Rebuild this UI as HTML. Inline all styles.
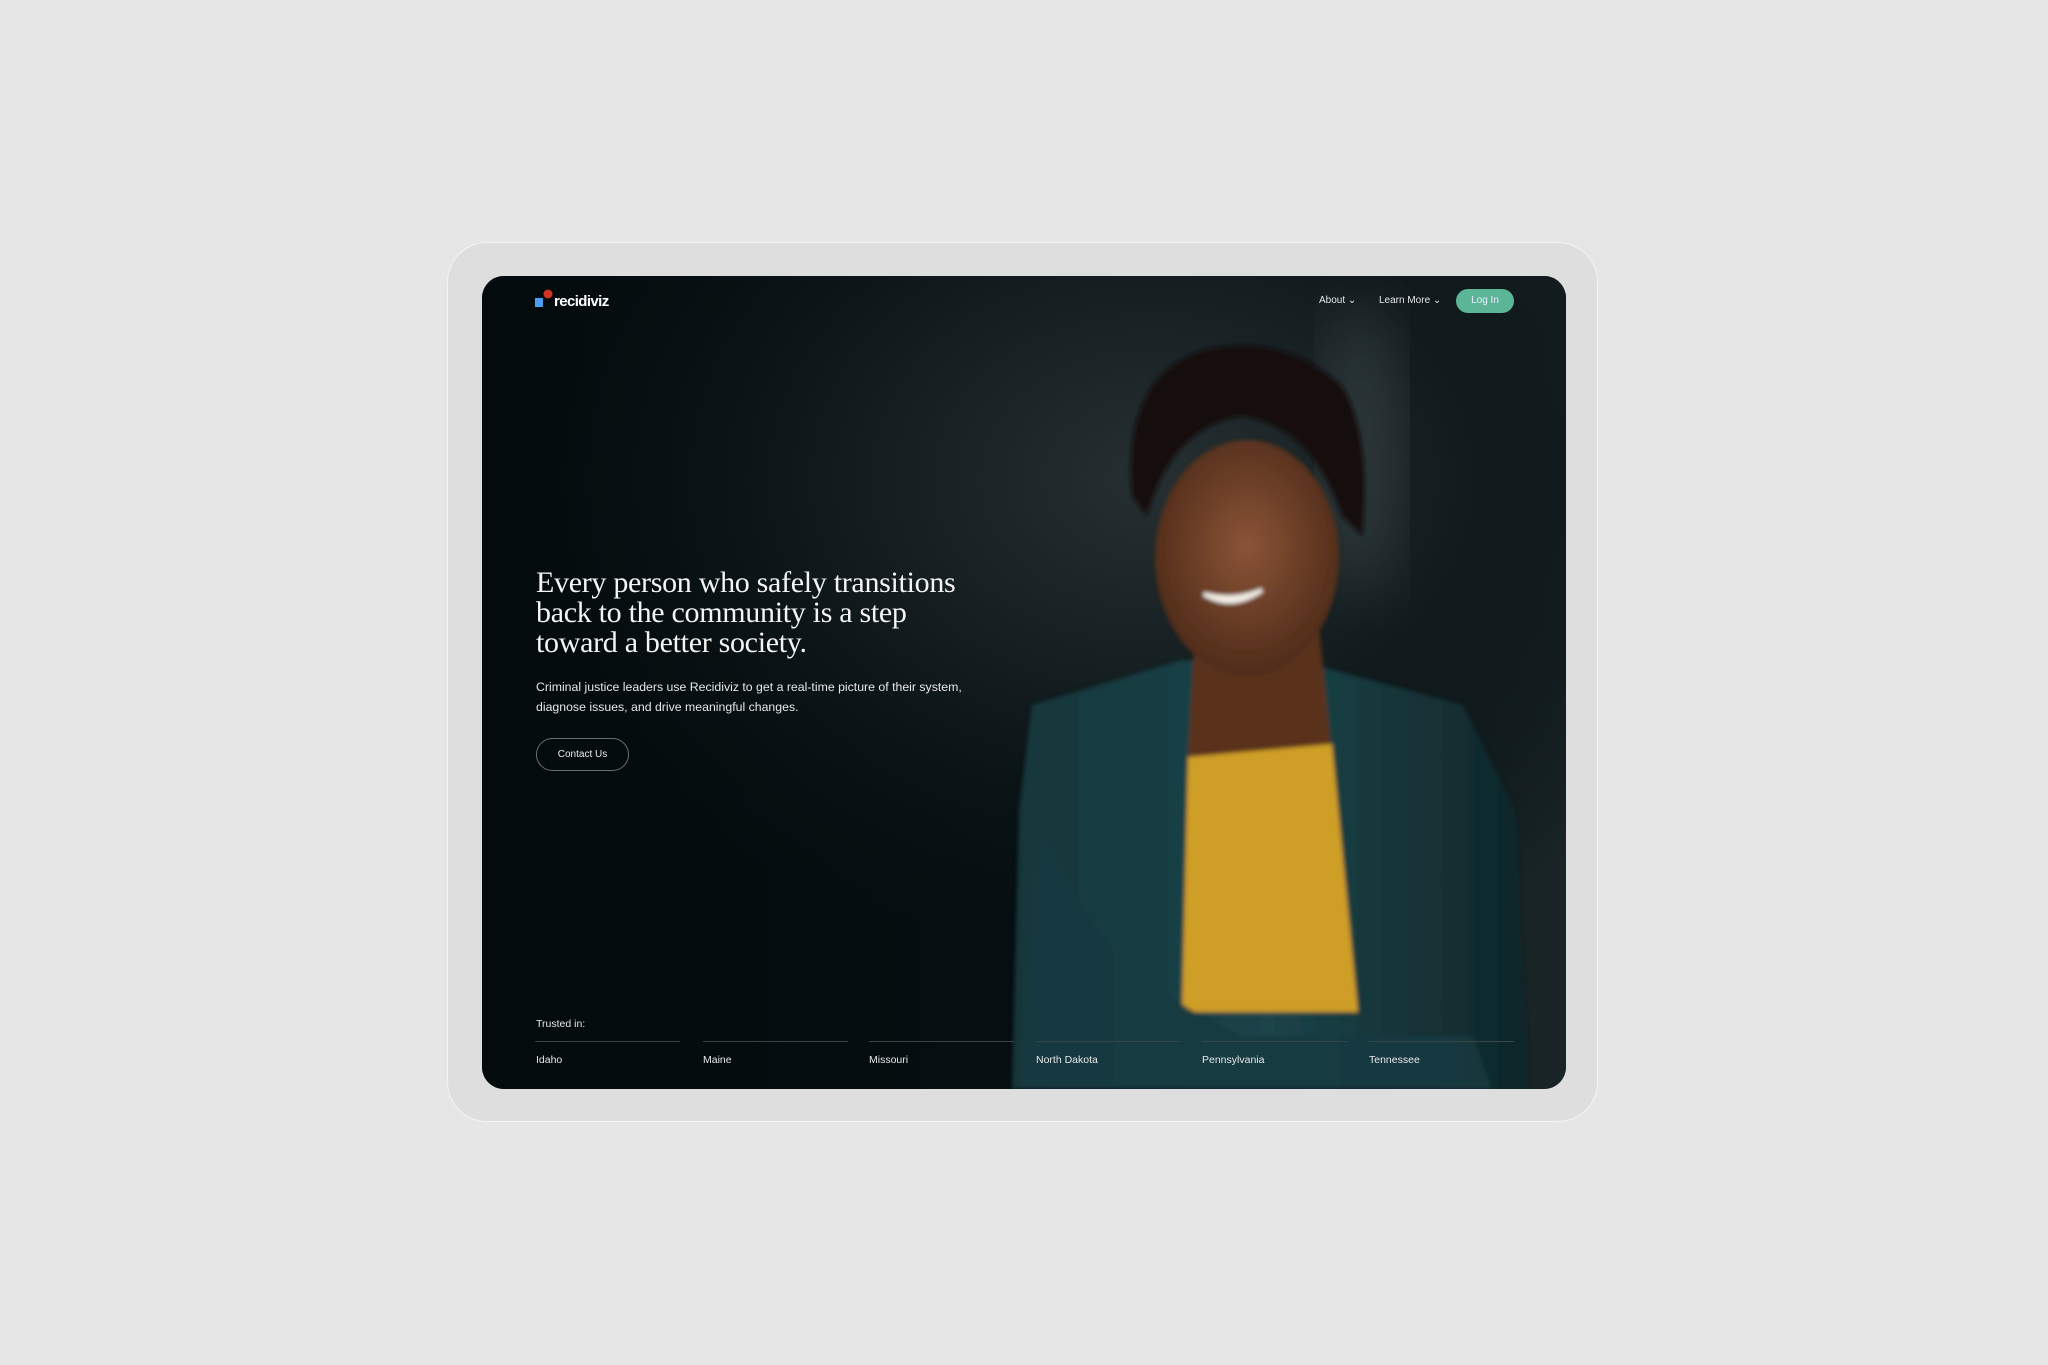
<!DOCTYPE html>
<html><head><meta charset="utf-8">
<style>
html,body{margin:0;padding:0;width:2048px;height:1365px;background:#e6e6e6;overflow:hidden;font-family:"Liberation Sans",sans-serif}
.outer{position:absolute;left:447px;top:242px;width:1151px;height:880px;background:#dedede;border:1px solid #f4f4f4;border-radius:40px;box-sizing:border-box}
.screen{position:absolute;left:482px;top:276px;width:1084px;height:813px;border-radius:22px;overflow:hidden;background:#050d0f}
.abs{position:absolute}
.nav{color:#e6e6e6;font-size:10px}
h1{position:absolute;left:54px;top:292px;margin:0;width:450px;font-family:"Liberation Serif",serif;font-weight:normal;font-size:30px;line-height:30px;color:#f4f4f4;letter-spacing:-0.3px}
p.sub{position:absolute;left:54px;top:401px;margin:0;width:470px;font-size:12.3px;line-height:20px;color:#e8e8e8}
.btn{position:absolute;left:54px;top:462px;width:93px;height:33px;border:1px solid #6a6f70;border-radius:17px;box-sizing:border-box;color:#eee;font-size:10px;text-align:center;line-height:31px}
.st{position:absolute;top:778px;font-size:10.5px;color:#e8e8e8}
.ln{position:absolute;top:765px;width:145px;height:1px;background:#3a4446}
</style></head><body>
<div class="outer"></div>
<div class="screen">
<svg class="abs" style="left:0;top:0" width="1084" height="813" viewBox="0 0 1084 813">
<defs>
<radialGradient id="bg" cx="0.62" cy="0.25" r="0.6">
<stop offset="0" stop-color="#263032"/><stop offset="0.5" stop-color="#111a1d"/><stop offset="1" stop-color="#061012" stop-opacity="0"/>
</radialGradient>
<linearGradient id="lf" x1="0" x2="1"><stop offset="0" stop-color="#040b0d"/><stop offset="0.5" stop-color="#050e10"/><stop offset="1" stop-color="#1a2528"/></linearGradient>
<radialGradient id="face" cx="0.5" cy="0.45" r="0.6"><stop offset="0" stop-color="#8a5436"/><stop offset="1" stop-color="#4a2817"/></radialGradient>
<linearGradient id="jk" x1="0" x2="1"><stop offset="0" stop-color="#14363b"/><stop offset="0.5" stop-color="#1b4449"/><stop offset="1" stop-color="#0f2529"/></linearGradient>
<filter id="b"><feGaussianBlur stdDeviation="2"/></filter>
<filter id="b2"><feGaussianBlur stdDeviation="30"/></filter>
</defs>
<rect width="1084" height="813" fill="url(#lf)"/>
<rect width="1084" height="813" fill="url(#bg)"/>
<ellipse cx="880" cy="170" rx="40" ry="150" fill="#4a5558" opacity="0.45" filter="url(#b2)"/>
<g filter="url(#b)">
<polygon points="550,429 700,384 837,390 981,429 1033,534 1046,813 530,813 537,534" fill="url(#jk)"/>
<polygon points="713,351 837,351 850,480 706,480" fill="#5a321f"/>
<polygon points="706,481 850,468 876,736 700,736" fill="#cf9e25"/>
<path d="M560,560 Q620,700 760,760 L990,760 L1010,813 L540,813 Z" fill="#173a40" opacity="0.9"/>
<path d="M650,220 Q640,100 720,75 Q800,55 860,110 Q890,160 880,260 L860,240 Q830,150 760,140 Q690,150 665,240 Z" fill="#15110f"/>
<ellipse cx="765" cy="282" rx="92" ry="118" fill="url(#face)"/>
<path d="M722,318 Q750,335 780,314 Q752,326 722,318 Z" fill="#f2eee6" stroke="#f2eee6" stroke-width="4"/>
</g>
</svg>
<svg class="abs" style="left:50px;top:10px" width="30" height="30">
<rect x="3" y="12" width="8" height="9" fill="#4a9ef0"/>
<circle cx="16" cy="8" r="4.5" fill="#d23424"/>
</svg>
<div class="abs" style="left:72px;top:17px;color:#fff;font-size:15px;font-weight:bold;letter-spacing:-0.6px">recidiviz</div>
<div class="abs nav" style="left:837px;top:19px">About &#8964;</div>
<div class="abs nav" style="left:897px;top:19px">Learn More &#8964;</div>
<div class="abs" style="left:974px;top:13px;width:58px;height:24px;border-radius:12px;background:#5db597;color:#eef;font-size:10px;text-align:center;line-height:24px">Log In</div>
<h1>Every person who safely transitions back to the community is a step toward a better society.</h1>
<p class="sub">Criminal justice leaders use Recidiviz to get a real-time picture of their system, diagnose issues, and drive meaningful changes.</p>
<div class="btn">Contact Us</div>
<div class="abs" style="left:54px;top:742px;font-size:10.5px;color:#e8e8e8">Trusted in:</div>
<div class="ln" style="left:53px"></div><div class="ln" style="left:221px"></div><div class="ln" style="left:387px"></div><div class="ln" style="left:554px"></div><div class="ln" style="left:720px"></div><div class="ln" style="left:887px"></div>
<div class="st" style="left:54px">Idaho</div><div class="st" style="left:221px">Maine</div><div class="st" style="left:387px">Missouri</div><div class="st" style="left:554px">North Dakota</div><div class="st" style="left:720px">Pennsylvania</div><div class="st" style="left:887px">Tennessee</div>
</div>
</body></html>
